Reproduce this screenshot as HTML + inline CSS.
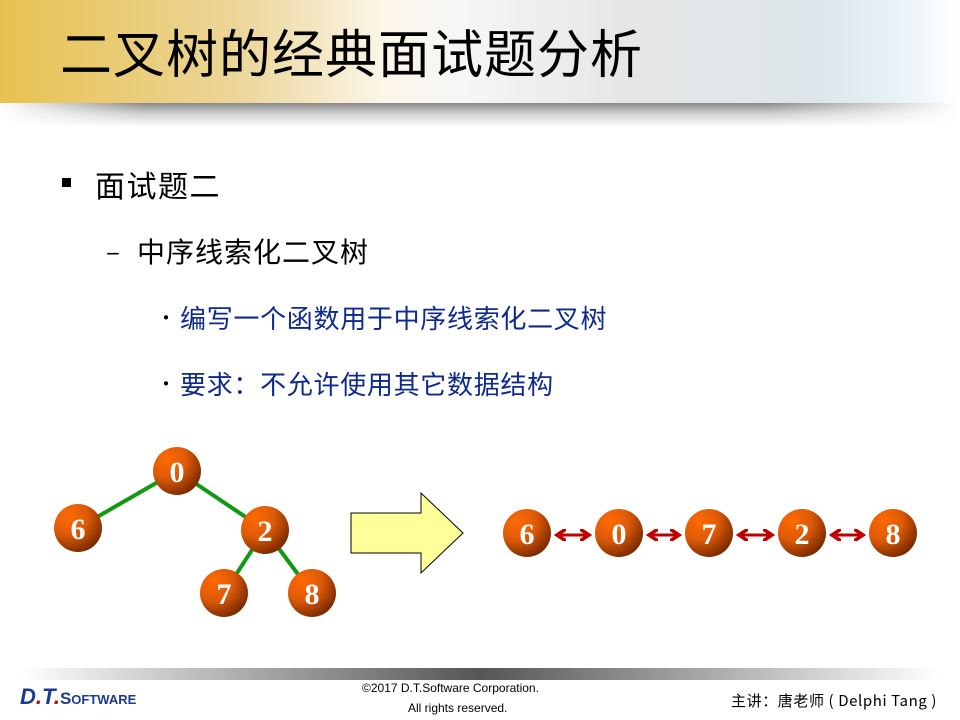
<!DOCTYPE html>
<html><head><meta charset="utf-8"><style>
body{margin:0;width:960px;height:720px;overflow:hidden;background:#fff;font-family:"Liberation Sans","Noto Sans CJK SC",sans-serif;position:relative}
.hdr{position:absolute;left:0;top:0;width:960px;height:103px;background:linear-gradient(90deg,#e8c152 0%,#ecd699 25%,#fbf6e8 40%,#f6f6f6 48%,#e6e6e6 65%,#dde6ea 85%,#e6f2f6 93%,#fff 100%)}
.shd{position:absolute;left:0;top:103px;width:960px;height:24px;background:linear-gradient(180deg,#8a8a8a 0%,#d0d0d0 45%,#fff 100%);-webkit-mask:linear-gradient(90deg,transparent 0%,#000 15%,#000 80%,transparent 100%)}
.title{position:absolute;left:60px;top:18px;font-size:52px;color:#000;font-family:"Noto Sans CJK SC",sans-serif;line-height:66px;letter-spacing:1px}
.t{position:absolute;font-family:"Noto Sans CJK SC",sans-serif;white-space:nowrap}
.fshd{position:absolute;left:20px;top:668px;width:920px;height:12px;background:linear-gradient(90deg,#fff 0%,#aaa 25%,#555 50%,#aaa 75%,#fff 100%)}
</style></head><body>
<div class="hdr"></div><div class="shd"></div>
<div class="title">二叉树的经典面试题分析</div>
<div style="position:absolute;left:62px;top:178px;width:9px;height:9px;background:#000"></div>
<div class="t" style="left:95px;top:162px;font-size:30px;letter-spacing:1.5px;color:#000">面试题二</div>
<div class="t" style="left:106px;top:232px;font-size:26px;color:#000">–</div>
<div class="t" style="left:137px;top:231px;font-size:28px;letter-spacing:1px;color:#000">中序线索化二叉树</div>
<div class="t" style="left:156px;top:302px;font-size:20px;color:#000">•</div>
<div class="t" style="left:180px;top:299px;font-size:26px;letter-spacing:0.7px;color:#0d2a8c">编写一个函数用于中序线索化二叉树</div>
<div class="t" style="left:156px;top:368px;font-size:20px;color:#000">•</div>
<div class="t" style="left:180px;top:365px;font-size:26px;letter-spacing:0.7px;color:#0d2a8c">要求：不允许使用其它数据结构</div>
<svg style="position:absolute;left:0;top:0" width="960" height="720">
<defs><radialGradient id="g" cx="30%" cy="25%" r="80%"><stop offset="0" stop-color="#ff6a00"/><stop offset="0.5" stop-color="#dd5a08"/><stop offset="1" stop-color="#7a2a00"/></radialGradient>
<marker id="ah" markerWidth="4" markerHeight="4" refX="3" refY="2" orient="auto-start-reverse" markerUnits="strokeWidth"><path d="M0,0 L3,2 L0,4" fill="none" stroke="#c00000" stroke-width="1.2"/></marker></defs>
<g stroke="#119911" stroke-width="4"><line x1="177" y1="471" x2="78" y2="528"/><line x1="177" y1="471" x2="265" y2="530"/><line x1="265" y1="530" x2="224" y2="593"/><line x1="265" y1="530" x2="312" y2="593"/></g>
<path d="M351,513 H421 V493 L463,533 L421,573 V553 H351 Z" fill="#ffff99" stroke="#000" stroke-width="1"/>
<g stroke="#c00000" stroke-width="3" marker-start="url(#ah)" marker-end="url(#ah)"><line x1="557" y1="535" x2="589" y2="535"/><line x1="649" y1="535" x2="679" y2="535"/><line x1="739" y1="535" x2="772" y2="535"/><line x1="832" y1="535" x2="863" y2="535"/></g>
<g fill="url(#g)"><circle cx="177" cy="471" r="24"/><circle cx="78" cy="528" r="24"/><circle cx="265" cy="530" r="24"/><circle cx="224" cy="593" r="24"/><circle cx="312" cy="593" r="24"/>
<circle cx="527" cy="533" r="24"/><circle cx="619" cy="533" r="24"/><circle cx="709" cy="533" r="24"/><circle cx="802" cy="533" r="24"/><circle cx="893" cy="533" r="24"/></g>
<g fill="#fff" font-family="Liberation Serif,serif" font-weight="bold" font-size="30" text-anchor="middle">
<text x="177" y="482">0</text><text x="78" y="539">6</text><text x="265" y="541">2</text><text x="224" y="604">7</text><text x="312" y="604">8</text>
<text x="527" y="544">6</text><text x="619" y="544">0</text><text x="709" y="544">7</text><text x="802" y="544">2</text><text x="893" y="544">8</text></g>
</svg>
<div class="fshd"></div>
<div class="t" style="left:20px;top:684px;font-family:'Liberation Sans',sans-serif;font-size:22px;font-weight:bold;font-style:italic;color:#1a3a8c">D<span style="color:#c00">.</span>T<span style="color:#c00">.</span><span style="font-style:normal;font-size:17px;color:#1a3a8c">S</span><span style="font-style:normal;font-size:13px">OFTWARE</span></div>
<div class="t" style="left:362px;top:681px;font-family:'Liberation Sans',sans-serif;font-size:12px;color:#000">©2017 D.T.Software Corporation.</div>
<div class="t" style="left:408px;top:701px;font-family:'Liberation Sans',sans-serif;font-size:12px;color:#000">All rights reserved.</div>
<div class="t" style="left:731px;top:690px;font-size:15px;letter-spacing:0.6px;color:#000">主讲：唐老师 ( Delphi Tang )</div>
</body></html>
